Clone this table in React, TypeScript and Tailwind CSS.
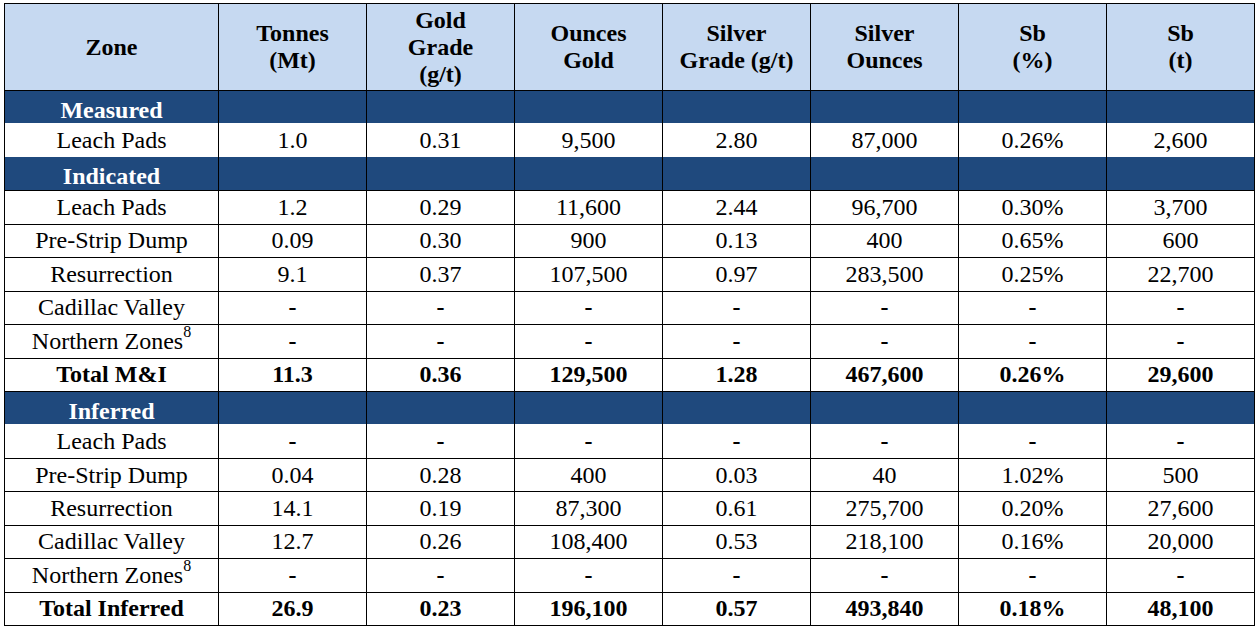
import React from "react";

type Row =
  | { kind: "section"; label: string; top: boolean }
  | { kind: "data"; cells: string[]; top: boolean; bold?: boolean };

const D = ["-", "-", "-", "-", "-", "-", "-"];

const rows: Row[] = [
  { kind: "section", label: "Measured", top: true },
  { kind: "data", cells: ["Leach Pads", "1.0", "0.31", "9,500", "2.80", "87,000", "0.26%", "2,600"], top: false },
  { kind: "section", label: "Indicated", top: false },
  { kind: "data", cells: ["Leach Pads", "1.2", "0.29", "11,600", "2.44", "96,700", "0.30%", "3,700"], top: true },
  { kind: "data", cells: ["Pre-Strip Dump", "0.09", "0.30", "900", "0.13", "400", "0.65%", "600"], top: true },
  { kind: "data", cells: ["Resurrection", "9.1", "0.37", "107,500", "0.97", "283,500", "0.25%", "22,700"], top: true },
  { kind: "data", cells: ["Cadillac Valley", ...D], top: true },
  { kind: "data", cells: ["Northern Zones", ...D], top: true },
  { kind: "data", cells: ["Total M&I", "11.3", "0.36", "129,500", "1.28", "467,600", "0.26%", "29,600"], top: true, bold: true },
  { kind: "section", label: "Inferred", top: true },
  { kind: "data", cells: ["Leach Pads", ...D], top: false },
  { kind: "data", cells: ["Pre-Strip Dump", "0.04", "0.28", "400", "0.03", "40", "1.02%", "500"], top: true },
  { kind: "data", cells: ["Resurrection", "14.1", "0.19", "87,300", "0.61", "275,700", "0.20%", "27,600"], top: true },
  { kind: "data", cells: ["Cadillac Valley", "12.7", "0.26", "108,400", "0.53", "218,100", "0.16%", "20,000"], top: true },
  { kind: "data", cells: ["Northern Zones", ...D], top: true },
  { kind: "data", cells: ["Total Inferred", "26.9", "0.23", "196,100", "0.57", "493,840", "0.18%", "48,100"], top: true, bold: true },
];

const headers: React.ReactNode[] = [
  <>Zone</>,
  <>Tonnes<br />(Mt)</>,
  <>Gold<br />Grade<br />(g/t)</>,
  <>Ounces<br />Gold</>,
  <>Silver<br />Grade (g/t)</>,
  <>Silver<br />Ounces</>,
  <>Sb<br />(%)</>,
  <>Sb<br />(t)</>,
];

export default function App() {
  return (
    <div className="min-h-[631px] w-[1259px] bg-white pt-[3px] pl-[4px] font-['Liberation_Serif'] text-[24px] text-black">
      <div className="w-[1251px] border border-black">
        <div className="grid h-[86px] grid-cols-[213px_repeat(7,148px)] bg-[#C6D9F1]">
          {headers.map((h, i) => (
            <div
              key={i}
              className={`flex items-center justify-center text-center font-bold leading-[27px] ${i > 0 ? "border-l border-black" : ""}`}
            >
              <div>{h}</div>
            </div>
          ))}
        </div>
        {rows.map((r, ri) => {
          if (r.kind === "section") {
            return (
              <div
                key={ri}
                className={`grid h-[33.44px] grid-cols-[213px_repeat(7,148px)] bg-[#1F497D] ${r.top ? "border-t border-black" : ""}`}
              >
                {Array.from({ length: 8 }).map((_, i) => (
                  <div
                    key={i}
                    className={`flex items-center justify-center pt-[6px] font-bold leading-[27px] text-white ${i > 0 ? "border-l border-black" : ""}`}
                  >
                    {i === 0 ? r.label : ""}
                  </div>
                ))}
              </div>
            );
          }
          return (
            <div
              key={ri}
              className={`grid h-[33.44px] grid-cols-[213px_repeat(7,148px)] bg-white ${r.top ? "border-t border-black" : ""}`}
            >
              {r.cells.map((c, i) => (
                <div
                  key={i}
                  className={`flex items-center justify-center whitespace-nowrap leading-[27px] ${i > 0 ? "border-l border-black" : ""} ${r.bold || c === "-" ? "font-bold" : ""}`}
                >
                  {c}
                  {c === "Northern Zones" ? (
                    <sup className="-top-[9px] text-[16px]">8</sup>
                  ) : null}
                </div>
              ))}
            </div>
          );
        })}
      </div>
    </div>
  );
}
